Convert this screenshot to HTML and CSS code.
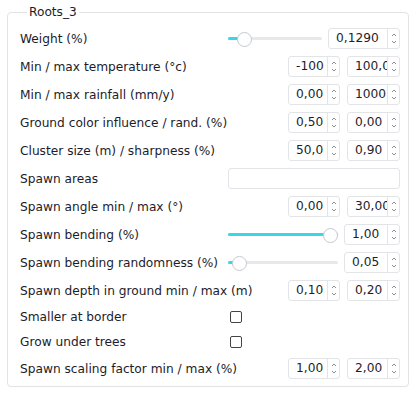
FILE: index.html
```html
<!DOCTYPE html>
<html>
<head>
<meta charset="utf-8">
<link rel="stylesheet" href="styles.css">
</head>
<body>
<fieldset class="group">
  <legend class="group-title">Roots_3</legend>
  <div class="rows">
    <div class="row">
      <span class="label">Weight (%)</span>
      <div class="ctrl">
        <div class="slider"><div class="track"><div class="fill" style="width:17px"></div></div><div class="knob" style="left:9px"></div></div>
        <div class="spin w72"><span class="val">0,1290</span><span class="arrows"><svg width="6" height="4" viewBox="0 0 6 4"><path d="M1 3 L3 1 L5 3" /></svg><svg width="6" height="4" viewBox="0 0 6 4"><path d="M1 1 L3 3 L5 1" /></svg></span></div>
      </div>
    </div>
    <div class="row">
      <span class="label">Min / max temperature (°c)</span>
      <div class="ctrl pair">
        <div class="spin w52"><span class="val">-100</span><span class="arrows"><svg width="6" height="4" viewBox="0 0 6 4"><path d="M1 3 L3 1 L5 3" /></svg><svg width="6" height="4" viewBox="0 0 6 4"><path d="M1 1 L3 3 L5 1" /></svg></span></div>
        <div class="spin w53"><span class="val">100,0</span><span class="arrows"><svg width="6" height="4" viewBox="0 0 6 4"><path d="M1 3 L3 1 L5 3" /></svg><svg width="6" height="4" viewBox="0 0 6 4"><path d="M1 1 L3 3 L5 1" /></svg></span></div>
      </div>
    </div>
    <div class="row">
      <span class="label">Min / max rainfall (mm/y)</span>
      <div class="ctrl pair">
        <div class="spin w52"><span class="val">0,00</span><span class="arrows"><svg width="6" height="4" viewBox="0 0 6 4"><path d="M1 3 L3 1 L5 3" /></svg><svg width="6" height="4" viewBox="0 0 6 4"><path d="M1 1 L3 3 L5 1" /></svg></span></div>
        <div class="spin w53"><span class="val">1000</span><span class="arrows"><svg width="6" height="4" viewBox="0 0 6 4"><path d="M1 3 L3 1 L5 3" /></svg><svg width="6" height="4" viewBox="0 0 6 4"><path d="M1 1 L3 3 L5 1" /></svg></span></div>
      </div>
    </div>
    <div class="row">
      <span class="label">Ground color influence / rand. (%)</span>
      <div class="ctrl pair">
        <div class="spin w52"><span class="val">0,50</span><span class="arrows"><svg width="6" height="4" viewBox="0 0 6 4"><path d="M1 3 L3 1 L5 3" /></svg><svg width="6" height="4" viewBox="0 0 6 4"><path d="M1 1 L3 3 L5 1" /></svg></span></div>
        <div class="spin w53"><span class="val">0,00</span><span class="arrows"><svg width="6" height="4" viewBox="0 0 6 4"><path d="M1 3 L3 1 L5 3" /></svg><svg width="6" height="4" viewBox="0 0 6 4"><path d="M1 1 L3 3 L5 1" /></svg></span></div>
      </div>
    </div>
    <div class="row">
      <span class="label">Cluster size (m) / sharpness (%)</span>
      <div class="ctrl pair">
        <div class="spin w52"><span class="val">50,0</span><span class="arrows"><svg width="6" height="4" viewBox="0 0 6 4"><path d="M1 3 L3 1 L5 3" /></svg><svg width="6" height="4" viewBox="0 0 6 4"><path d="M1 1 L3 3 L5 1" /></svg></span></div>
        <div class="spin w53"><span class="val">0,90</span><span class="arrows"><svg width="6" height="4" viewBox="0 0 6 4"><path d="M1 3 L3 1 L5 3" /></svg><svg width="6" height="4" viewBox="0 0 6 4"><path d="M1 1 L3 3 L5 1" /></svg></span></div>
      </div>
    </div>
    <div class="row">
      <span class="label">Spawn areas</span>
      <div class="ctrl">
        <div class="textbox"></div>
      </div>
    </div>
    <div class="row">
      <span class="label">Spawn angle min / max (°)</span>
      <div class="ctrl pair">
        <div class="spin w52"><span class="val">0,00</span><span class="arrows"><svg width="6" height="4" viewBox="0 0 6 4"><path d="M1 3 L3 1 L5 3" /></svg><svg width="6" height="4" viewBox="0 0 6 4"><path d="M1 1 L3 3 L5 1" /></svg></span></div>
        <div class="spin w53"><span class="val">30,00</span><span class="arrows"><svg width="6" height="4" viewBox="0 0 6 4"><path d="M1 3 L3 1 L5 3" /></svg><svg width="6" height="4" viewBox="0 0 6 4"><path d="M1 1 L3 3 L5 1" /></svg></span></div>
      </div>
    </div>
    <div class="row">
      <span class="label">Spawn bending (%)</span>
      <div class="ctrl">
        <div class="slider"><div class="track"><div class="fill" style="width:100%"></div></div><div class="knob" style="left:95px"></div></div>
        <div class="spin w56"><span class="val">1,00</span><span class="arrows"><svg width="6" height="4" viewBox="0 0 6 4"><path d="M1 3 L3 1 L5 3" /></svg><svg width="6" height="4" viewBox="0 0 6 4"><path d="M1 1 L3 3 L5 1" /></svg></span></div>
      </div>
    </div>
    <div class="row">
      <span class="label">Spawn bending randomness (%)</span>
      <div class="ctrl">
        <div class="slider"><div class="track"><div class="fill" style="width:12px"></div></div><div class="knob" style="left:4px"></div></div>
        <div class="spin w56"><span class="val">0,05</span><span class="arrows"><svg width="6" height="4" viewBox="0 0 6 4"><path d="M1 3 L3 1 L5 3" /></svg><svg width="6" height="4" viewBox="0 0 6 4"><path d="M1 1 L3 3 L5 1" /></svg></span></div>
      </div>
    </div>
    <div class="row">
      <span class="label">Spawn depth in ground min / max (m)</span>
      <div class="ctrl pair">
        <div class="spin w52"><span class="val">0,10</span><span class="arrows"><svg width="6" height="4" viewBox="0 0 6 4"><path d="M1 3 L3 1 L5 3" /></svg><svg width="6" height="4" viewBox="0 0 6 4"><path d="M1 1 L3 3 L5 1" /></svg></span></div>
        <div class="spin w53"><span class="val">0,20</span><span class="arrows"><svg width="6" height="4" viewBox="0 0 6 4"><path d="M1 3 L3 1 L5 3" /></svg><svg width="6" height="4" viewBox="0 0 6 4"><path d="M1 1 L3 3 L5 1" /></svg></span></div>
      </div>
    </div>
    <div class="row short">
      <span class="label">Smaller at border</span>
      <div class="ctrl left"><span class="check"></span></div>
    </div>
    <div class="row short">
      <span class="label">Grow under trees</span>
      <div class="ctrl left"><span class="check"></span></div>
    </div>
    <div class="row">
      <span class="label">Spawn scaling factor min / max (%)</span>
      <div class="ctrl pair">
        <div class="spin w52"><span class="val">1,00</span><span class="arrows"><svg width="6" height="4" viewBox="0 0 6 4"><path d="M1 3 L3 1 L5 3" /></svg><svg width="6" height="4" viewBox="0 0 6 4"><path d="M1 1 L3 3 L5 1" /></svg></span></div>
        <div class="spin w53"><span class="val">2,00</span><span class="arrows"><svg width="6" height="4" viewBox="0 0 6 4"><path d="M1 3 L3 1 L5 3" /></svg><svg width="6" height="4" viewBox="0 0 6 4"><path d="M1 1 L3 3 L5 1" /></svg></span></div>
      </div>
    </div>
  </div>
</fieldset>
</body>
</html>
```
FILE: styles.css
```css
html, body {
  margin: 0;
  padding: 0;
  background: #ffffff;
}
body {
  padding: 5px 7px 0 7px;
  font-family: "DejaVu Sans", sans-serif;
  font-size: 12.2px;
  color: #1c1c2a;
}
.group {
  margin: 0;
  border: 1px solid #e3e3e3;
  border-radius: 4px;
  padding: 9px 8px 7px 12px;
  min-width: 0;
}
.group-title {
  padding: 0 2px;
  margin-left: 7px;
  line-height: 14px;
}
.rows {
  display: flex;
  flex-direction: column;
  gap: 7px;
}
.row {
  display: grid;
  grid-template-columns: 208px 172px;
  align-items: center;
  height: 21px;
}
.row.short {
  height: 18px;
}
.label {
  white-space: nowrap;
}
.ctrl {
  display: flex;
  align-items: center;
  justify-content: flex-end;
  gap: 6px;
}
.ctrl.pair {
  gap: 7px;
}
.ctrl.left {
  justify-content: flex-start;
  padding-left: 2px;
}
.slider {
  position: relative;
  flex: 1;
  height: 16px;
  display: flex;
  align-items: center;
}
.track {
  width: 100%;
  height: 3px;
  background: #e6e8eb;
  border-radius: 2px;
}
.fill {
  height: 100%;
  background: #3cd5e8;
  border-radius: 2px;
}
.knob {
  position: absolute;
  top: 1px;
  width: 13px;
  height: 13px;
  border-radius: 50%;
  background: #ffffff;
  border: 1px solid #c5c9cf;
}
.spin {
  display: flex;
  height: 21px;
  box-sizing: border-box;
  border: 1px solid #e2e4e7;
  border-radius: 3px;
  background: #fff;
  overflow: hidden;
}
.w72 { width: 72px; }
.w52 { width: 52px; }
.w53 { width: 53px; }
.w56 { width: 56px; }
.val {
  flex: 1;
  min-width: 0;
  overflow: hidden;
  white-space: nowrap;
  padding-left: 7px;
  line-height: 19px;
}
.arrows {
  width: 12px;
  border-left: 1px solid #e2e4e7;
  display: flex;
  flex-direction: column;
  align-items: center;
  justify-content: space-around;
  padding: 2px 0;
  box-sizing: border-box;
}
.arrows svg {
  display: block;
}
.arrows path {
  fill: none;
  stroke: #8a8d92;
  stroke-width: 1;
}
.textbox {
  width: 172px;
  height: 21px;
  box-sizing: border-box;
  border: 1px solid #e2e4e7;
  border-radius: 3px;
}
.check {
  width: 12px;
  height: 12px;
  box-sizing: border-box;
  border: 1.5px solid #444;
  border-radius: 2px;
}
```
